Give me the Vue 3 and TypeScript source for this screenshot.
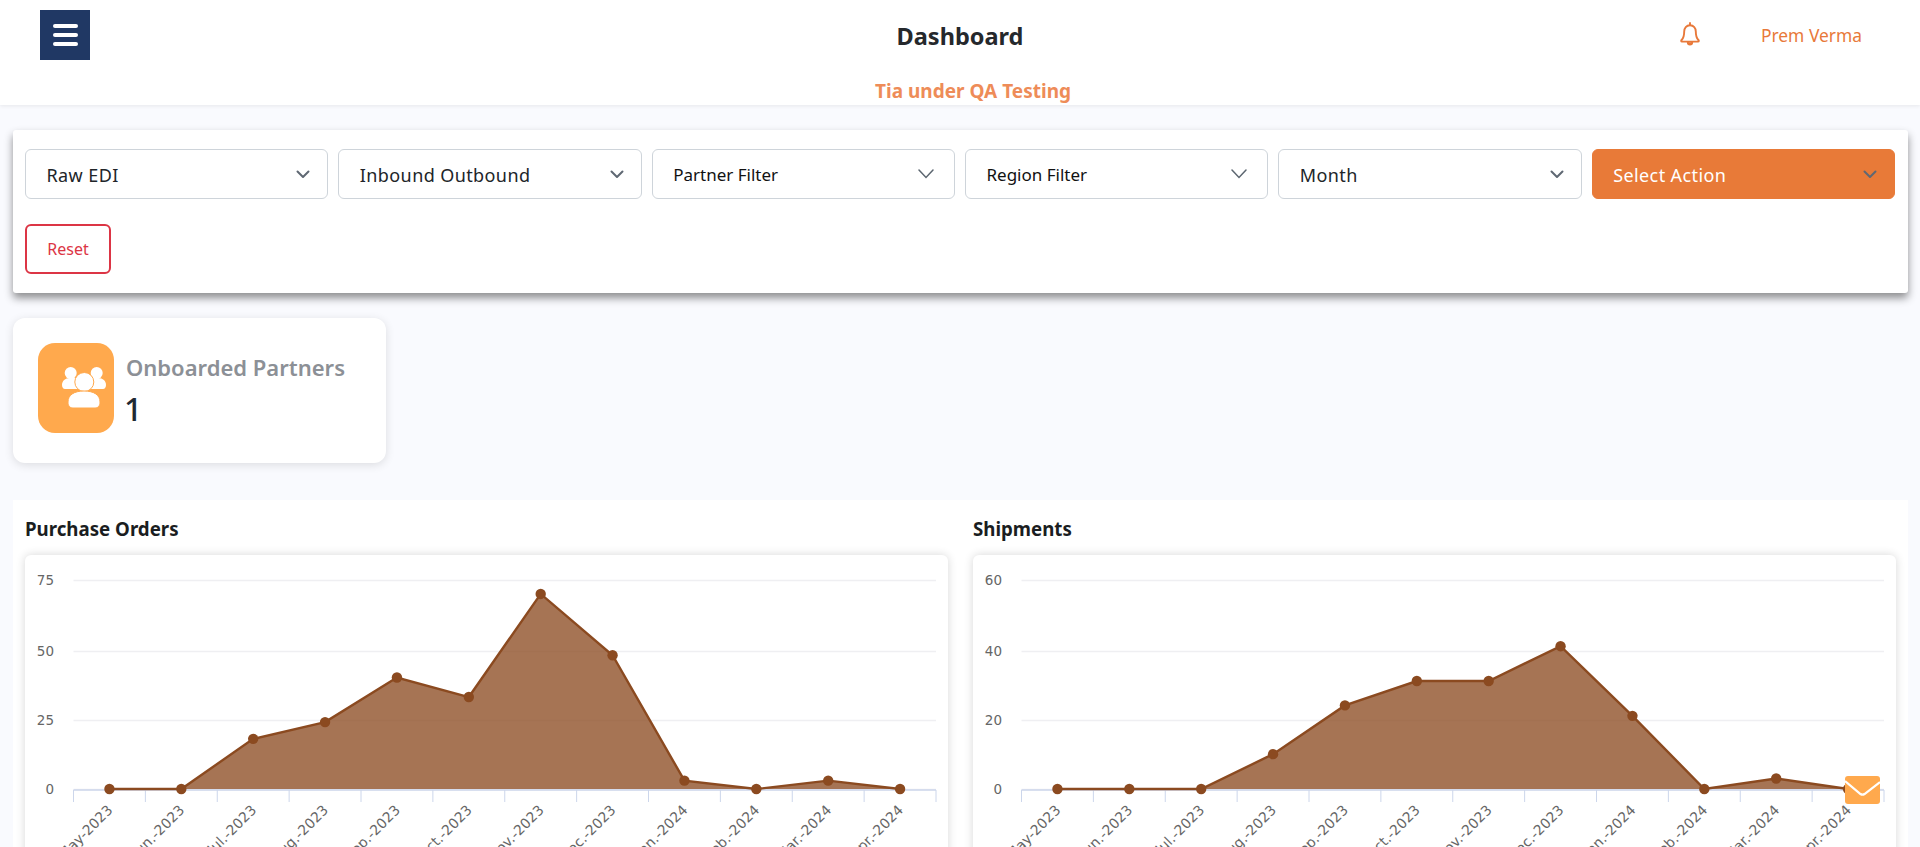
<script setup lang="ts">
interface ChartInfo {
  title: string
  yTicks: { label: string; y: number }[]
  max: number
  values: number[]
}

const filters = [
  { label: 'Raw EDI', kind: 'native' },
  { label: 'Inbound Outbound', kind: 'native' },
  { label: 'Partner Filter', kind: 'multi' },
  { label: 'Region Filter', kind: 'multi' },
  { label: 'Month', kind: 'native' },
  { label: 'Select Action', kind: 'action' },
]

const months = [
  'May-2023', 'Jun.-2023', 'Jul.-2023', 'Aug.-2023', 'Sep.-2023', 'Oct.-2023',
  'Nov.-2023', 'Dec.-2023', 'Jan.-2024', 'Feb.-2024', 'Mar.-2024', 'Apr.-2024',
]

// plot area inside the chart card
const plotLeft = 48.5
const plotWidth = 862.5
const plotTop = 25
const plotBottom = 234
const step = plotWidth / 12

const charts: ChartInfo[] = [
  {
    title: 'Purchase Orders',
    max: 75,
    yTicks: [
      { label: '75', y: 25 },
      { label: '50', y: 96 },
      { label: '25', y: 165 },
      { label: '0', y: 234 },
    ],
    values: [0, 0, 18, 24, 40, 33, 70, 48, 3, 0, 3, 0],
  },
  {
    title: 'Shipments',
    max: 60,
    yTicks: [
      { label: '60', y: 25 },
      { label: '40', y: 96 },
      { label: '20', y: 165 },
      { label: '0', y: 234 },
    ],
    values: [0, 0, 0, 10, 24, 31, 31, 41, 21, 0, 3, 0],
  },
]

const ticks = Array.from({ length: 13 }, (_, i) => plotLeft + i * step)

function pointsOf(chart: ChartInfo) {
  return chart.values.map((v, i) => ({
    x: plotLeft + (i + 0.5) * step,
    y: plotBottom - (v / chart.max) * (plotBottom - plotTop),
  }))
}

function linePath(chart: ChartInfo) {
  return pointsOf(chart).map((p) => `${p.x},${p.y}`).join(' ')
}

function areaPath(chart: ChartInfo) {
  const pts = pointsOf(chart)
  return `${pts[0].x},${plotBottom} ${linePath(chart)} ${pts[pts.length - 1].x},${plotBottom}`
}
</script>

<template>
  <div class="page">
    <header class="topbar">
      <div class="top-row">
        <div class="top-left">
          <button class="menu-btn" aria-label="Menu">
            <span></span><span></span><span></span>
          </button>
        </div>
        <h1 class="page-title">Dashboard</h1>
        <div class="top-right">
          <svg class="bell" viewBox="0 0 22 24" width="22" height="24" fill="none" stroke="#e8793a" stroke-width="1.9" stroke-linejoin="round" stroke-linecap="round">
            <path d="M11 3.2c-3.600 0-5.800 2.800-5.800 6.200 0 4.600-1 7-2.600 8.600-.6.600-.6 1.600.4 1.600h16c1 0 1-1 .4-1.600-1.600-1.600-2.600-4-2.600-8.600 0-3.400-2.200-6.200-5.800-6.200z" />
            <path d="M11 3V1" />
            <path d="M8.800 20.200c0 3 4.400 3 4.400 0" fill="#e8793a" />
          </svg>
          <span class="user-name">Prem Verma</span>
        </div>
      </div>
      <div class="env-note">Tia under QA Testing</div>
    </header>

    <main class="content">
      <section class="filter-card">
        <div class="filter-grid">
          <div
            v-for="f in filters"
            :key="f.label"
            class="select-box"
            :class="f.kind"
          >
            <span class="select-text">{{ f.label }}</span>
            <svg v-if="f.kind === 'multi'" class="chev-multi" viewBox="0 0 16 10" width="16" height="10" fill="none" stroke="#5c6670" stroke-width="1.5" stroke-linecap="round">
              <path d="M1 1l7 7.500L15 1" />
            </svg>
            <svg v-else class="chev" viewBox="0 0 16 16" width="16" height="16" fill="none" stroke="#5f6873" stroke-width="2" stroke-linecap="round" stroke-linejoin="round">
              <path d="M2.500 5.500l5.500 5.500 5.500-5.500" />
            </svg>
          </div>
        </div>
        <button class="reset-btn">Reset</button>
      </section>

      <section class="stat-card">
        <div class="stat-icon">
          <svg viewBox="0 0 44 42" width="44" height="42">
            <circle cx="8.700" cy="6" r="6" fill="#fff" />
            <circle cx="34.700" cy="6" r="6" fill="#fff" />
            <path d="M0 18c0-4 3-7 8-7h28c5 0 8 3 8 7 0 2-1 4-3 4H3c-2 0-3-2-3-4z" fill="#fff" />
            <circle cx="22.300" cy="15" r="9.500" fill="#fff" stroke="#ffa94d" stroke-width="1" />
            <path d="M6 35c0-7 6-11 16-11s16 4 16 11c0 4-2 6-5 6H11c-3 0-5-2-5-6z" fill="#fff" stroke="#ffa94d" stroke-width="1" />
          </svg>
        </div>
        <div class="stat-text">
          <div class="stat-label">Onboarded Partners</div>
          <div class="stat-value">1</div>
        </div>
      </section>

      <section class="chart-section">
        <div v-for="chart in charts" :key="chart.title" class="chart-col">
          <h2 class="chart-title">{{ chart.title }}</h2>
          <div class="chart-card">
            <svg class="chart-svg" width="922" height="340">
              <line
                v-for="t in chart.yTicks"
                :key="t.label"
                :x1="plotLeft"
                :x2="plotLeft + plotWidth"
                :y1="t.y + 0.5"
                :y2="t.y + 0.5"
                stroke="#efeff2"
                stroke-width="1.500"
              />
              <text
                v-for="t in chart.yTicks"
                :key="'y' + t.label"
                class="axis-text"
                x="29"
                :y="t.y + 5"
                text-anchor="end"
              >{{ t.label }}</text>
              <line :x1="plotLeft" :x2="plotLeft + plotWidth" y1="235" y2="235" stroke="#ccd6eb" stroke-width="1.500" />
              <line
                v-for="x in ticks"
                :key="x"
                :x1="x"
                :x2="x"
                y1="235"
                y2="247"
                stroke="#ccd6eb"
              />
              <polygon :points="areaPath(chart)" fill="#8b4a20" fill-opacity="0.77" />
              <polyline :points="linePath(chart)" fill="none" stroke="#8b4a20" stroke-width="2.400" />
              <circle
                v-for="(p, i) in pointsOf(chart)"
                :key="i"
                :cx="p.x"
                :cy="p.y"
                r="5.200"
                fill="#8b4a20"
              />
              <text
                v-for="(m, i) in months"
                :key="m"
                class="axis-text month"
                text-anchor="end"
                :x="plotLeft + (i + 0.5) * step + 4"
                y="256"
                :transform="`rotate(-45 ${plotLeft + (i + 0.5) * step + 4} 256)`"
              >{{ m }}</text>
            </svg>
          </div>
        </div>
      </section>
    </main>

    <button class="mail-btn" aria-label="Messages">
      <svg viewBox="0 0 35 28" width="35" height="28" fill="none">
        <path d="M0 5l15.500 13c1.200.8 2.800.8 4 0L35 6" stroke="#fff" stroke-width="2.200" />
      </svg>
    </button>
  </div>
</template>

<style>
html,
body {
  margin: 0;
  overflow: hidden;
}
</style>

<style scoped>
.page {
  position: relative;
  height: 847px;
  overflow: hidden;
  background: #f9fafe;
  font-family: "Noto Sans", "Open Sans", sans-serif;
  color: #212529;
}
.topbar {
  height: 105px;
  box-sizing: border-box;
  padding-top: 10px;
  background: #fff;
  box-shadow: 0 1px 4px rgba(0, 0, 0, 0.08);
}
.top-row {
  display: grid;
  grid-template-columns: 1fr auto 1fr;
  align-items: center;
  height: 50px;
}
.top-left {
  padding-left: 40px;
}
.menu-btn {
  display: flex;
  flex-direction: column;
  justify-content: center;
  align-items: center;
  gap: 5px;
  width: 50px;
  height: 50px;
  padding: 0;
  border: 0;
  background: #203864;
}
.menu-btn span {
  display: block;
  width: 25px;
  height: 4px;
  border-radius: 2px;
  background: #fff;
}
.page-title {
  margin: 0;
  padding-top: 2px;
  font-size: 23.500px;
  font-weight: 700;
  color: #25282c;
}
.top-right {
  display: flex;
  justify-content: flex-end;
  align-items: center;
  padding-right: 58px;
}
.bell {
  margin-right: 60px;
  margin-top: -3px;
}
.user-name {
  font-size: 17.400px;
  color: #e8793a;
}
.env-note {
  padding: 18px 0 0 26px;
  text-align: center;
  font-size: 19px;
  line-height: 26px;
  font-weight: 700;
  color: #ee8c58;
}
.content {
  padding: 25px 12px 0 13px;
}
.filter-card {
  padding: 19px 13px 19px 12px;
  background: #fff;
  border-radius: 3px;
  box-shadow: 0 5px 8px rgba(0, 0, 0, 0.44);
}
.filter-grid {
  display: grid;
  grid-template-columns: repeat(6, 1fr);
  gap: 10px;
}
.select-box {
  display: flex;
  justify-content: space-between;
  align-items: center;
  height: 50px;
  box-sizing: border-box;
  padding: 0 16px 0 20.500px;
  border: 1px solid #ced4da;
  border-radius: 6px;
  font-size: 18px;
  letter-spacing: 0.4px;
  color: #212529;
}
.select-text {
  padding-top: 2px;
}
.select-box.multi {
  padding-right: 20px;
  font-size: 17px;
  letter-spacing: 0;
  color: #111;
}
.select-box.multi .select-text {
  padding-top: 0;
}
.select-box.action {
  background: #e87a38;
  border-color: #e87a38;
  color: #fff;
}
.reset-btn {
  display: block;
  height: 50px;
  width: 86px;
  margin-top: 25px;
  padding: 0;
  border: 2px solid #dc3545;
  border-radius: 6px;
  background: #fff;
  font-family: inherit;
  font-size: 16px;
  color: #dc3545;
}
.stat-card {
  display: flex;
  align-items: center;
  gap: 12px;
  width: 373px;
  height: 145px;
  box-sizing: border-box;
  margin-top: 25px;
  padding-left: 25px;
  background: #fff;
  border-radius: 12px;
  box-shadow: 0 2px 10px rgba(0, 0, 0, 0.12);
}
.stat-icon {
  display: flex;
  justify-content: center;
  align-items: center;
  box-sizing: border-box;
  width: 76px;
  height: 90px;
  margin-bottom: 5px;
  padding-left: 16px;
  border-radius: 17px;
  background: #ffa94d;
}
.stat-label {
  font-size: 22px;
  line-height: 30px;
  font-weight: 600;
  color: #8c9096;
}
.stat-value {
  margin-top: 7px;
  margin-left: -2px;
  font-size: 32px;
  line-height: 40px;
  font-weight: 500;
  color: #1f2933;
}
.chart-section {
  display: grid;
  grid-template-columns: 1fr 1fr;
  gap: 25px;
  margin-top: 37px;
  padding: 0 12px;
  background: #fff;
}
.chart-title {
  margin: 0;
  padding-top: 16px;
  height: 39px;
  font-size: 18.700px;
  line-height: 26px;
  font-weight: 700;
  color: #1a1d21;
}
.chart-card {
  background: #fff;
  border-radius: 6px;
  box-shadow: 0 0 10px rgba(0, 0, 0, 0.16);
}
.chart-svg {
  display: block;
}
.axis-text {
  font-family: "DejaVu Sans", sans-serif;
  font-size: 13.500px;
  fill: #666;
}
.axis-text.month {
  font-size: 14px;
}
.mail-btn {
  position: absolute;
  left: 1845px;
  top: 776px;
  width: 35px;
  height: 28px;
  padding: 0;
  border: 0;
  border-radius: 3px;
  background: #ffa94d;
}
.mail-btn svg {
  display: block;
}
</style>
